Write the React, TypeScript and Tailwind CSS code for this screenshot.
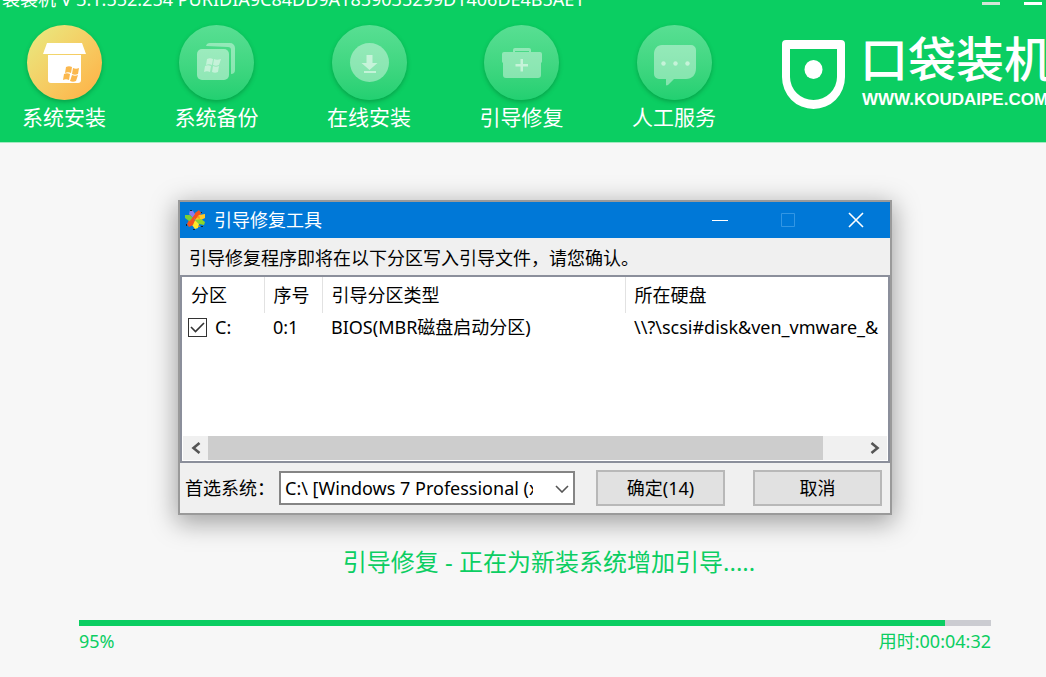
import React, { useState } from "react";

const BackupIcon = () => (
  <svg viewBox="0 0 75 75" className="w-full h-full" fill="#fff">
    <path d="M27 21a4 4 0 0 1 4-3h20a5 5 0 0 1 5 5v22a4 4 0 0 1-4 4V25a3 3 0 0 0-3-3z" opacity=".4" />
    <rect x="18" y="24" width="32" height="31" rx="5" opacity=".45" />
    <g opacity=".45">
      <path d="M28 34c2-1 4-1 6 0l-1 6c-2-1-4-1-6 0z" />
      <path d="M35 34c2 1 4 1 7 0l-2 6c-2 1-4 1-6 0z" />
      <path d="M26 41c2-1 4-1 6 0l-1 6c-2-1-4-1-6 0z" />
      <path d="M34 41c2 1 4 1 6 0l-1 6c-2 1-4 1-6 0z" />
    </g>
  </svg>
);

const InstallIcon = () => (
  <svg viewBox="0 0 75 75" className="w-full h-full">
    <path d="M20 18h35l4 11H16z" fill="#fff" />
    <path d="M21 30h33v25a3 3 0 0 1-3 3H24a3 3 0 0 1-3-3z" fill="#fff" />
    <g fill="#fbb84e">
      <path d="M39 42c2-1 4-1 6 0l-1 6c-2-1-4-1-6 0z" />
      <path d="M46 43c2 1 4 1 6 0l-1 6c-2 1-4 1-6 0z" />
      <path d="M37 49c2-1 4-1 6 0l-1 6c-2-1-4-1-6 0z" />
      <path d="M45 50c2 1 4 1 6 0l-2 6c-2 1-4 1-6 0z" />
    </g>
  </svg>
);

const OnlineIcon = () => (
  <svg viewBox="0 0 75 75" className="w-full h-full" fill="#fff">
    <circle cx="37.500" cy="37.500" r="19.500" opacity=".4" />
    <path d="M34.500 30h6v8h5l-8 7-8-7h5zM32 46h12v2H32z" opacity=".5" />
  </svg>
);

const RepairIcon = () => (
  <svg viewBox="0 0 75 75" className="w-full h-full" fill="#fff">
    <g opacity=".4">
      <path d="M29 27v-2a2 2 0 0 1 2-2h14a2 2 0 0 1 2 2v2h-2v-1H31v1z" />
      <path d="M20 27h36a2 2 0 0 1 2 2v7a2 2 0 0 1-1 2v12a3 3 0 0 1-3 3H22a3 3 0 0 1-3-3V38a2 2 0 0 1-1-2v-7a2 2 0 0 1 2-2z" />
    </g>
    <path d="M36.500 34h2.500v5h5v2.500h-5v5h-2.500v-5h-5V39h5z" opacity=".5" />
  </svg>
);

const ServiceIcon = () => (
  <svg viewBox="0 0 75 75" className="w-full h-full" fill="#fff">
    <path d="M25 20h29a5 5 0 0 1 5 5v18c0 7-4 11-10 11H37l-6 6c-2 1-2 0-2-1v-5h-7a5 5 0 0 1-5-5V29c0-5 3-9 8-9z" opacity=".4" />
    <g opacity=".5">
      <circle cx="26.500" cy="38.500" r="2.200" />
      <circle cx="38.500" cy="38.500" r="2.200" />
      <circle cx="50.500" cy="38.500" r="2.200" />
    </g>
  </svg>
);

const ToolIcon = () => (
  <svg viewBox="0 0 22 22" className="w-[22px] h-[22px]">
    <path d="M11 11 5 5 6 1l3 1 2 3z" fill="#8c7cf0" />
    <path d="m11 11 0-7 4-3 2 3-2 5z" fill="#f4521e" />
    <path d="m11 11 4-5 6-1 0 4-4 2z" fill="#ffc928" />
    <path d="m11 11 6-1 4 3-1 3-5-1z" fill="#8ed629" />
    <path d="m11 11 4 4-1 4-3 1-3-4z" fill="#ffe928" />
    <path d="m11 11-2 5-4 2-2-3 2-4z" fill="#f4521e" />
    <path d="M11 11 5 12 1 9l0-3 5 0z" fill="#7bcf35" />
    <path d="m6 12 5-7 1 0-2 7-4 4z" fill="#f4521e" />
    <path d="m13 9 2-3 1 4zM14 18l1-2 1 2z" fill="#fb9a16" />
    <path d="M6 1h2v1H6zM2 15h1v2H2zM9 20h2v1H9zM17 3h1v1h-1zM17 17h2v1h-2z" fill="#14233a" />
  </svg>
);

const navItems = [
  { label: "系统安装", icon: <InstallIcon />, active: true },
  { label: "系统备份", icon: <BackupIcon />, active: false },
  { label: "在线安装", icon: <OnlineIcon />, active: false },
  { label: "引导修复", icon: <RepairIcon />, active: false },
  { label: "人工服务", icon: <ServiceIcon />, active: false },
];

const Header: React.FC = () => {
  return (
    <header className="bg-[#0bce62] border-b border-[#a5e9c2] text-white overflow-hidden">
      <div className="h-2 flex items-end justify-between pl-[2px] pr-1">
        <span className="text-lg leading-[18px] whitespace-nowrap">
          袋装机 V 3.1.552.254 PURIDIA9C84DD9A1859035299D1406DE4B5AE1
        </span>
        <div className="flex self-start pt-[2px] gap-6">
          <button aria-label="菜单" className="w-[18px] h-[3px] bg-[#d4e4d6]" />
          <button aria-label="最小化" className="w-[18px] h-[3px] bg-white" />
        </div>
      </div>
      <div className="flex pt-[17px] pb-[11px] pl-[22px]">
        <nav className="flex justify-between w-[694px] shrink-0">
          {navItems.map((item) => (
            <button key={item.label} className="w-[84px] flex flex-col items-center">
              <span
                className={`w-[75px] h-[75px] rounded-full shadow-[0_2px_4px_rgba(0,80,30,0.35)] ${
                  item.active
                    ? "bg-linear-to-br from-[#e6ec82] to-[#ffae42]"
                    : "bg-linear-to-b from-[#58df93] to-[#22d071]"
                }`}
              >
                {item.icon}
              </span>
              <span className="mt-[3px] text-[21px] leading-7 whitespace-nowrap">{item.label}</span>
            </button>
          ))}
        </nav>
        <div className="flex shrink-0 ml-[66px] pt-[10px]">
          <svg viewBox="0 0 63 69" className="w-[63px] h-[69px] mt-[5px]">
            <path
              fillRule="evenodd"
              fill="#fff"
              d="M4 0h55a4 4 0 0 1 4 4v33a31.500 32 0 0 1-63 0V4a4 4 0 0 1 4-4zM8 9v28a23.500 23 0 0 0 47 0V9z"
            />
            <ellipse cx="31.500" cy="29.500" rx="9" ry="9.500" fill="#fff" />
          </svg>
          <div className="ml-[15px] flex flex-col whitespace-nowrap">
            <span className="text-[48px] leading-[48px] font-medium">口袋装机</span>
            <span className="font-['Liberation_Sans',sans-serif] font-bold text-[17px] leading-5 mt-[7px] pl-[2px]">
              WWW.KOUDAIPE.COM
            </span>
          </div>
        </div>
      </div>
    </header>
  );
};

const RepairDialog: React.FC = () => {
  const [checked, setChecked] = useState(true);

  return (
    <section
      role="dialog"
      aria-labelledby="dialog-title"
      className="w-[714px] max-w-full bg-[#f0f0f0] border-2 border-[#9a9a9a] shadow-[0_6px_24px_2px_rgba(0,0,0,0.35)] text-lg text-black"
    >
      <div className="h-9 bg-[#0078d7] text-white flex items-center pl-1">
        <ToolIcon />
        <h1 id="dialog-title" className="ml-2 flex-1 leading-6">
          引导修复工具
        </h1>
        <button aria-label="最小化" className="w-[68px] h-9 flex items-center justify-center">
          <svg viewBox="0 0 16 16" className="w-4 h-4" stroke="#fff">
            <path d="M0 8.500h16" />
          </svg>
        </button>
        <button aria-label="最大化" disabled className="w-[68px] h-9 flex items-center justify-center">
          <svg viewBox="0 0 16 16" className="w-4 h-4" stroke="#3296e4" fill="none">
            <path d="M1.500 1.500h13v13h-13z" />
          </svg>
        </button>
        <button aria-label="关闭" className="w-[68px] h-9 flex items-center justify-center">
          <svg viewBox="0 0 16 16" className="w-4 h-4" stroke="#fff" strokeWidth="1.600">
            <path d="m1 1 14 14M15 1 1 15" />
          </svg>
        </button>
      </div>
      <p className="h-[37px] pt-2 pl-[9px] leading-6 whitespace-nowrap overflow-hidden">
        引导修复程序即将在以下分区写入引导文件，请您确认。
      </p>

      <div className="border-2 border-[#8b8f9b] bg-white h-[188px] flex flex-col overflow-hidden">
        <div className="flex-1 overflow-hidden">
          <table className="table-fixed w-full text-left whitespace-nowrap">
            <colgroup>
              <col className="w-[82px]" />
              <col className="w-[58px]" />
              <col className="w-[303px]" />
              <col />
            </colgroup>
            <thead>
              <tr className="h-9">
                <th className="font-normal pl-[9px] border-r border-[#e2e2e2]">分区</th>
                <th className="font-normal pl-[9px] border-r border-[#e2e2e2]">序号</th>
                <th className="font-normal pl-[9px] border-r border-[#e2e2e2]">引导分区类型</th>
                <th className="font-normal pl-[9px]">所在硬盘</th>
              </tr>
            </thead>
            <tbody>
              <tr className="h-7">
                <td className="pl-[6px]">
                  <label className="flex items-center gap-2">
                    <span className="relative w-[19px] h-[19px]">
                      <input
                        type="checkbox"
                        checked={checked}
                        onChange={() => setChecked(!checked)}
                        className="appearance-none block w-[19px] h-[19px] border border-[#333] bg-white"
                      />
                      {checked && (
                        <svg
                          viewBox="0 0 19 19"
                          className="absolute inset-0 pointer-events-none"
                          fill="none"
                          stroke="#333"
                          strokeWidth="1.600"
                        >
                          <path d="m3 9 4.500 4.500L16 5" />
                        </svg>
                      )}
                    </span>
                    C:
                  </label>
                </td>
                <td className="pl-[9px]">0:1</td>
                <td className="pl-[9px]">BIOS(MBR磁盘启动分区)</td>
                <td className="pl-[9px] overflow-hidden">\\?\scsi#disk&amp;ven_vmware_&amp;</td>
              </tr>
            </tbody>
          </table>
        </div>
        <div className="h-6 mb-px mx-px bg-[#f0f0f0] flex">
          <button aria-label="向左滚动" className="w-[25px] flex items-center justify-center">
            <svg viewBox="0 0 10 12" className="w-[10px] h-3" fill="none" stroke="#555" strokeWidth="2.600">
              <path d="M8.500 1 2.500 6l6 5" />
            </svg>
          </button>
          <div className="flex-1">
            <div className="h-full w-[94%] bg-[#cdcdcd]" />
          </div>
          <button aria-label="向右滚动" className="w-[25px] flex items-center justify-center">
            <svg viewBox="0 0 10 12" className="w-[10px] h-3" fill="none" stroke="#555" strokeWidth="2.600">
              <path d="m1.500 1 6 5-6 5" />
            </svg>
          </button>
        </div>
      </div>

      <div className="flex items-center h-[50px] pl-[5px] pr-[8px]">
        <label htmlFor="system" className="whitespace-nowrap">
          首选系统：
        </label>
        <div className="relative flex-1 ml-1">
          <select
            id="system"
            className="appearance-none block w-full h-[34px] pl-1 pr-10 bg-white border-2 border-[#858585] leading-6"
          >
            <option>C:\ [Windows 7 Professional (x64)]</option>
          </select>
          <svg
            viewBox="0 0 14 8"
            className="absolute right-[6px] top-[14px] w-[14px] h-2 pointer-events-none"
            fill="none"
            stroke="#555"
            strokeWidth="1.600"
          >
            <path d="m1 1 6 6 6-6" />
          </svg>
        </div>
        <button className="ml-[21px] w-[129px] h-9 bg-[#e1e1e1] border-2 border-[#b8b8b8]">确定(14)</button>
        <button className="ml-7 w-[129px] h-9 bg-[#e1e1e1] border-2 border-[#b8b8b8]">取消</button>
      </div>
    </section>
  );
};

const App: React.FC = () => {
  const percent = 95;

  return (
    <div className="min-h-screen bg-[#f7f7f7] overflow-hidden font-['Noto_Sans','Noto_Sans_CJK_SC',sans-serif]">
      <Header />
      <main className="pt-[57px] pl-[79px] pr-[55px]">
        <div className="flex justify-center">
          <RepairDialog />
        </div>
        <p className="mt-[29px] pl-7 text-center text-2xl leading-9 text-[#0bce62]">
          引导修复 - 正在为新装系统增加引导.....
        </p>
        <div
          role="progressbar"
          aria-label="引导修复"
          aria-valuenow={percent}
          className="mt-10 h-[6px] bg-[#cbccd1]"
        >
          <div className="h-full bg-[#0bce62]" style={{ width: `${percent}%` }} />
        </div>
        <div className="mt-[3px] flex justify-between text-lg leading-6 text-[#0bce62]">
          <span>{percent}%</span>
          <span>用时:00:04:32</span>
        </div>
      </main>
    </div>
  );
};

export default App;
